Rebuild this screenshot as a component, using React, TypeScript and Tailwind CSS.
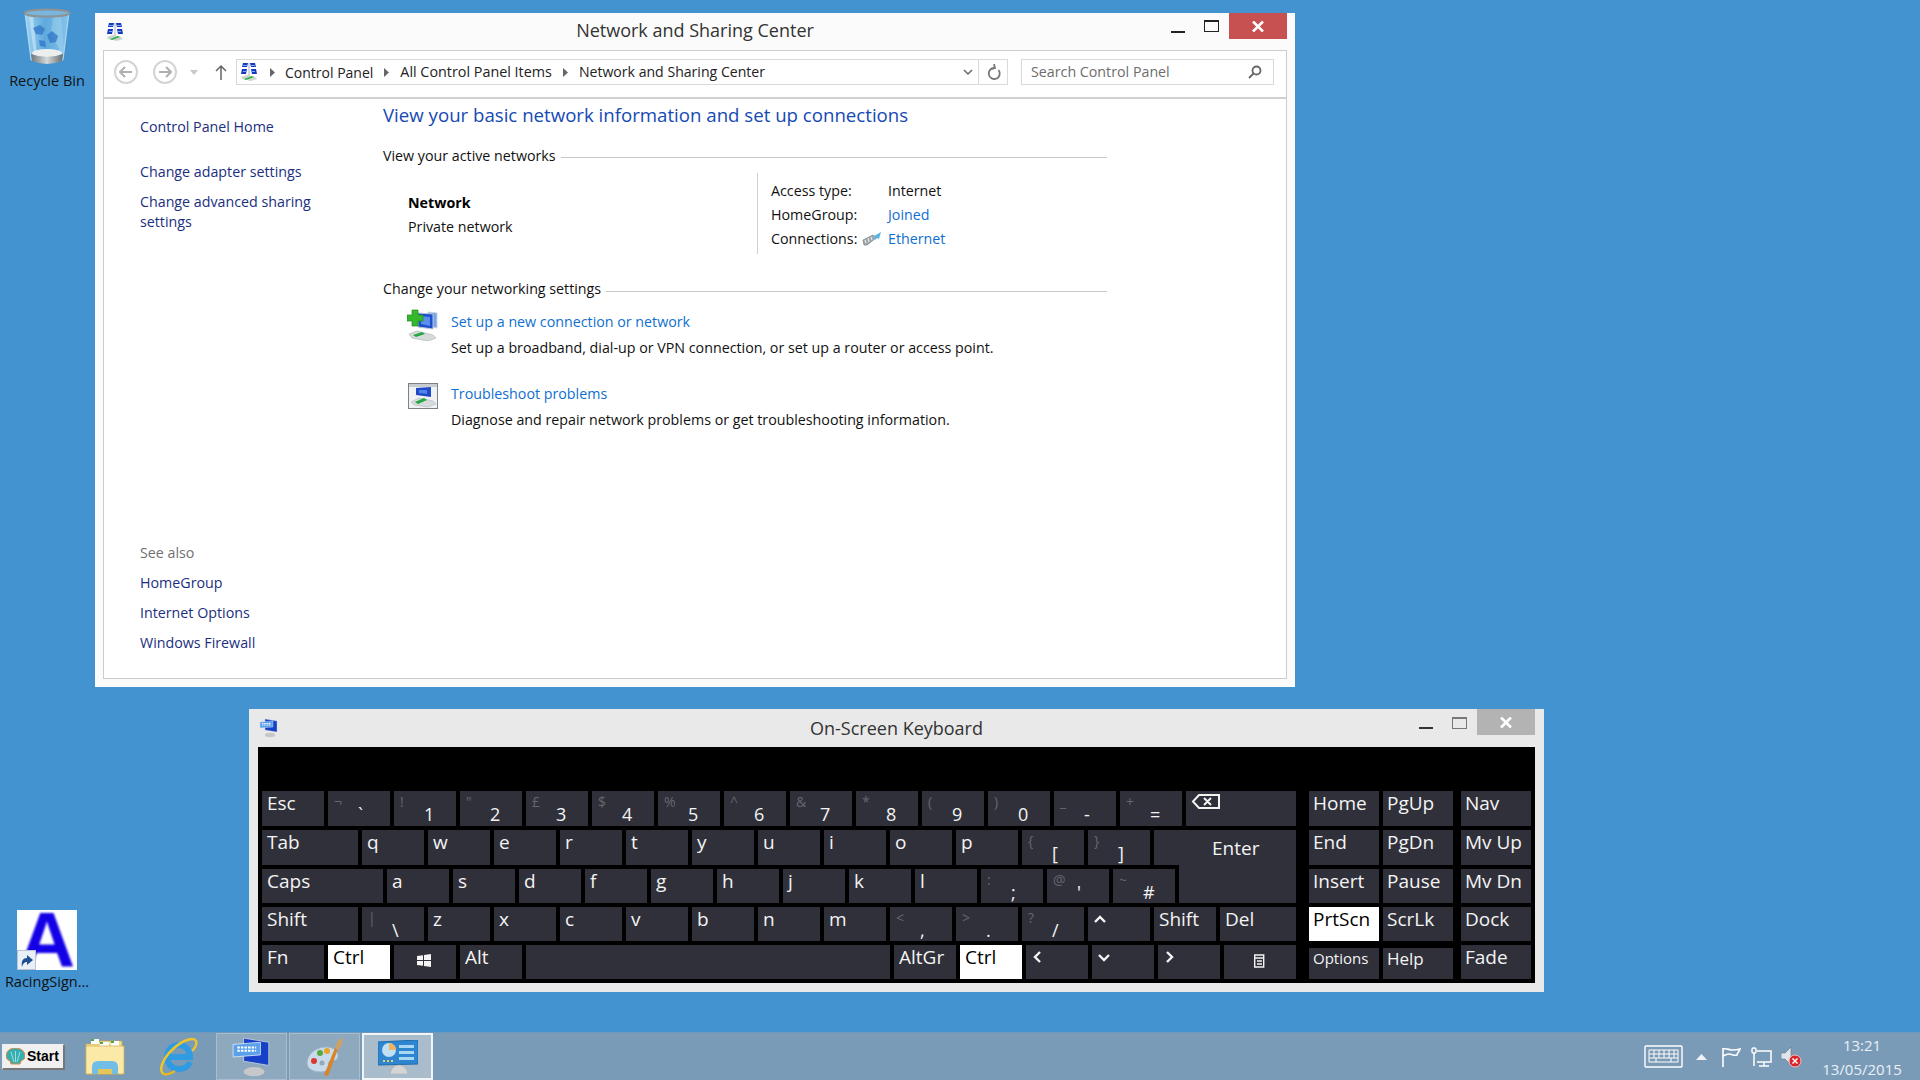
import type { ReactNode } from "react";

const FONT = "font-['Open_Sans','Noto_Sans',sans-serif]";

function CpIcon({ size = 20 }: { size?: number }) {
  return (
    <svg width={size} height={size} viewBox="0 0 20 20">
      <path d="M4 1h5l-1 4H3zM11 1h5l1 4h-5zM3 7h5l-1 5H2zM12 7h5l1 5h-5z" fill="#1438c0" />
      <path d="M4 3h4v1H4zM12 3h4v1h-4zM4 9h3v1H4zM13 9h3v1h-3z" fill="#7fa8f0" />
      <path d="M9 1h2v13H9z" fill="#cfd9ea" />
      <path d="M2 15l6-2 8 2 2 2-6 2-9-2z" fill="#cfd4cf" />
      <path d="M5 17l8-3 2 1-8 3z" fill="#2fb34a" />
    </svg>
  );
}

function RecycleBin() {
  return (
    <svg width="48" height="58" viewBox="0 0 48 58">
      <defs>
        <linearGradient id="binBody" x1="0" x2="1" y1="0" y2="0">
          <stop offset="0" stopColor="#9fd4f2" />
          <stop offset="0.45" stopColor="#5ea9dd" />
          <stop offset="1" stopColor="#86c4ea" />
        </linearGradient>
        <linearGradient id="binFoot" x1="0" x2="1" y1="0" y2="0">
          <stop offset="0" stopColor="#6f777b" />
          <stop offset="0.5" stopColor="#d5d8d8" />
          <stop offset="1" stopColor="#666e72" />
        </linearGradient>
      </defs>
      <path d="M2 5h44l-6 47q-16 5-32 0z" fill="url(#binBody)" stroke="#c7e4f6" strokeWidth="0.8" />
      <path d="M6 8l5 38 3 1-4-39z" fill="#d5ecf9" opacity="0.55" />
      <path d="M30 8l-2 16 11 24 2-5-3-35z" fill="#b5dcf4" opacity="0.35" />
      <ellipse cx="24" cy="5" rx="22.500" ry="3.600" fill="#7ab6dc" stroke="#8b9397" strokeWidth="2" />
      <path d="M10 20l7-3 5 4-3 6-6-1zM24 27l5-4 6 5-2 6-6 1zM16 32l6 1 1 6-6-1z" fill="#2f74c8" opacity="0.75" />
      <ellipse cx="24" cy="45" rx="15" ry="4" fill="#eceeee" />
      <path d="M8 46q16 6 32 0l-1 7q-15 6-30 0z" fill="url(#binFoot)" />
    </svg>
  );
}

function SetupIcon() {
  return (
    <svg width="32" height="32" viewBox="0 0 32 32">
      <path d="M21 3l9 1v15l-9-2z" fill="#78a2ea" stroke="#c8d4e6" />
      <path d="M11 4l15 1v15l-15-2z" fill="#1e4fcb" stroke="#b8c6dc" />
      <path d="M14 7l9 1v9l-9-2z" fill="#5a90ea" />
      <path d="M0 6h5V1h6v5h5v6h-5v5H5v-5H0z" fill="#35b82c" stroke="#1f8a1c" strokeWidth="0.7" />
      <path d="M2 25l8-3 16 4 3 3-8 3-16-3z" fill="#d7dbdc" stroke="#a9afb2" strokeWidth="0.6" />
      <path d="M6 26l9-3 3 2-9 3z" fill="#27a744" />
    </svg>
  );
}

function TroubleIcon() {
  return (
    <svg width="30" height="26" viewBox="0 0 30 26">
      <rect x="0.5" y="0.5" width="29" height="25" fill="#f1f2f3" stroke="#7d8286" />
      <rect x="1" y="1" width="28" height="3" fill="#c9ccd0" />
      <path d="M8 5l15-1v10l-15-2z" fill="#1f49c6" />
      <path d="M11 7l8 0v4l-8-1z" fill="#4f84e8" />
      <path d="M3 19l8-4 14 3 3 3-8 3-14-2z" fill="#d7dbdc" stroke="#a9afb2" strokeWidth="0.5" />
      <path d="M7 19l9-4 3 2-9 4z" fill="#27a744" />
    </svg>
  );
}

function EthernetIcon() {
  return (
    <svg width="20" height="15" viewBox="0 0 20 15">
      <path d="M1 8l10-5 3 3-9 7H2z" fill="#a3a8ad" stroke="#777c82" strokeWidth="0.7" />
      <path d="M3 8l1 3M6 6l1 4M9 5l1 3" stroke="#eef0f2" strokeWidth="1" />
      <path d="M12 4l7-4-2 7-2-1-2 2z" fill="#5db4e4" />
    </svg>
  );
}

function OskIcon({ w = 20, h = 20 }: { w?: number; h?: number }) {
  return (
    <svg width={w} height={h} viewBox="0 0 20 20">
      <path d="M6 1l12 2v11l-12-2z" fill="#1740c8" stroke="#c5d0de" strokeWidth="0.4" />
      <path d="M1 4l13-1v6L1 10z" fill="#5aa0ea" stroke="#dce6f4" strokeWidth="0.4" />
      <path d="M3 5.500h9M3 7h9" stroke="#fff" strokeWidth="0.9" strokeDasharray="1.200 0.500" />
      <ellipse cx="11" cy="17" rx="5" ry="2.200" fill="#c5c7c9" />
    </svg>
  );
}

function PaintIcon() {
  return (
    <svg width="40" height="40" viewBox="0 0 40 40">
      <path d="M2 26c0-9 9-16 19-16 8 0 12 4 12 9 0 4-4 5-7 5-3 0-3 3-2 5 1 3-2 6-8 6C8 35 2 32 2 26z" fill="#c8dbea" stroke="#9ab4ca" />
      <circle cx="9" cy="24" r="3" fill="#d83a32" />
      <circle cx="15" cy="16" r="3" fill="#58a83e" />
      <circle cx="22" cy="14" r="3" fill="#e6a52a" />
      <circle cx="17" cy="26" r="2.500" fill="#93a9bc" />
      <path d="M19 38l11-27 3 1-10 27z" fill="#d9832b" />
      <path d="M30 11l3-8 5-2-1 7-4 5z" fill="#c9a36a" />
    </svg>
  );
}

function ControlPanelIcon() {
  return (
    <svg width="40" height="34" viewBox="0 0 40 34">
      <path d="M0 2l40-2v24L0 25z" fill="#2f86d0" stroke="#1f6aae" />
      <circle cx="11" cy="10" r="7" fill="#bfe0f5" />
      <path d="M11 3a7 7 0 0 1 7 7h-7z" fill="#f2b35c" />
      <path d="M21 5h15v3H21zM21 11h15v3H21zM21 17h15v3H21z" fill="#a9d6f2" />
      <path d="M5 20h2v2H5zM9 20h2v2H9zM13 20h2v2h-2z" fill="#e8d16a" />
      <path d="M12 34c1-6 5-9 9-9s8 3 9 9z" fill="#d5d5d5" stroke="#a3a3a3" strokeWidth="0.5" />
    </svg>
  );
}

function FolderIcon() {
  return (
    <svg width="40" height="38" viewBox="0 0 40 38">
      <path d="M1 6h12l2-3h22v33H1z" fill="#f5dc8c" stroke="#c9a94e" strokeWidth="0.7" />
      <path d="M6 1h8v5H6zM15 4h9v5h-9zM26 3h8v6h-8z" fill="#fdfdfd" />
      <path d="M6 1h3v2H6zM15 4h3v2h-3zM26 3h3v2h-3z" fill="#4aa84a" />
      <path d="M1 8h38v28H1z" fill="#fbe9a8" stroke="#cfae52" strokeWidth="0.7" />
      <path d="M7 36v-7q0-6 6-6h14q6 0 6 6v7h-6v-5H13v5z" fill="#70bde6" />
      <path d="M13 31h14v5H13z" fill="#e4c65c" />
    </svg>
  );
}

function IeIcon() {
  return (
    <svg width="40" height="38" viewBox="0 0 40 38" fill="none">
      <path d="M10 19h22c0-7-5-12-11-12-7 0-12 5-12 12 0 7 5 12 12 12 5 0 9-2 11-7" stroke="#2f9be2" strokeWidth="6" />
      <path d="M6 36C0 34 4 21 15 11 26 1 36-1 38 3c1 3-1 7-4 10" stroke="#f0c52a" strokeWidth="2.400" />
      <path d="M4 35c3 3 8 1 13-2" stroke="#e8b820" strokeWidth="2.400" />
    </svg>
  );
}

function KeyboardTrayIcon() {
  return (
    <svg width="39" height="23" viewBox="0 0 39 23" fill="none" stroke="#fff">
      <rect x="1" y="1" width="37" height="21" rx="1" fill="#7a9ab5" strokeWidth="1.400" />
      <path d="M5 5h29v12H5z M10 5v8M15 5v8M20 5v8M25 5v8M30 5v8M5 9h29M5 13h29M12 13v4M27 13v4" strokeWidth="1" />
    </svg>
  );
}

type KeyDef = {
  w: number;
  label?: ReactNode;
  top?: string;
  main?: string;
  on?: boolean;
  pad?: string;
  cls?: string;
};

function Key({ w, label, top, main, on, pad, cls }: KeyDef) {
  return (
    <div
      className={`flex shrink-0 items-start overflow-hidden ${on ? "bg-white text-black" : "bg-[#30303a] text-[#f4f4f4]"} ${cls ?? ""}`}
      style={{ width: w }}
    >
      {label !== undefined && (
        <div className={`whitespace-nowrap text-[19px] leading-[24px] ${pad ?? "pl-[5px]"}`}>{label}</div>
      )}
      {main !== undefined && (
        <>
          <div className="w-[30px] pl-[6px] pt-[1px] text-[14px] leading-[20px] text-[#66666e]">{top}</div>
          <div className="pt-[12px] text-[18px] leading-[22px]">{main}</div>
        </>
      )}
    </div>
  );
}

const l = (label: ReactNode, w = 62, on = false): KeyDef => ({ w, label, on });
const s = (top: string, main: string, w = 62): KeyDef => ({ w, top, main });

const Chevron = ({ d }: { d: string }) => (
  <svg width="14" height="24" viewBox="0 0 14 24" className="ml-px" fill="none" stroke="#f4f4f4" strokeWidth="2.400">
    <path d={d} />
  </svg>
);

const Backspace = (
  <svg width="30" height="24" viewBox="0 0 30 24" fill="none" stroke="#f4f4f4" strokeWidth="2">
    <path d="M8 4h20v13H8l-6-6.500zM13 7l7 7M20 7l-7 7" />
  </svg>
);

const WinLogo = (
  <svg width="62" height="24" viewBox="0 0 62 24" className="-ml-[6px]" fill="#f4f4f4">
    <path d="M24 11l6-.8V15h-6zM31 10l7-1v6h-7zM24 16h6v4.800l-6-.8zM31 16h7v6l-7-1z" />
  </svg>
);

const MenuGlyph = (
  <svg width="72" height="24" viewBox="0 0 72 24" className="-ml-[5px]" fill="none" stroke="#f4f4f4" strokeWidth="1.400">
    <path d="M30.700 10h9v12h-9zM30.700 13h9M33 16h5M33 19h5" />
  </svg>
);

const rows: KeyDef[][] = [
  [l("Esc"), s("¬", "`"), s("!", "1"), s('"', "2"), s("£", "3"), s("$", "4"), s("%", "5"), s("^", "6"), s("&", "7"), s("*", "8"), s("(", "9"), s(")", "0"), s("_", "-"), s("+", "="), l(Backspace, 110)],
  [l("Tab", 96), l("q"), l("w"), l("e"), l("r"), l("t"), l("y"), l("u"), l("i"), l("o"), l("p"), s("{", "["), s("}", "]"), { w: 142, label: "Enter", pad: "pl-[58px] pt-[6px]" }],
  [l("Caps", 121), l("a"), l("s"), l("d"), l("f"), l("g"), l("h"), l("j"), l("k"), l("l"), s(":", ";"), s("@", "'"), s("~", "#"), { w: 117, cls: "-mt-1" }],
  [l("Shift", 96), s("|", "\\"), l("z"), l("x"), l("c"), l("v"), l("b"), l("n"), l("m"), s("<", ","), s(">", "."), s("?", "/"), l(<Chevron d="M1 15l5-5 5 5" />), l("Shift"), l("Del", 76)],
  [l("Fn"), l("Ctrl", 62, true), l(WinLogo), l("Alt"), { w: 364 }, l("AltGr"), l("Ctrl", 62, true), l(<Chevron d="M8 7l-5 5 5 5" />), l(<Chevron d="M1 10l5 5 5-5" />), l(<Chevron d="M3 7l5 5-5 5" />), l(MenuGlyph, 72)],
];

const navRows = [
  ["Home", "PgUp", "Nav"],
  ["End", "PgDn", "Mv Up"],
  ["Insert", "Pause", "Mv Dn"],
  ["PrtScn", "ScrLk", "Dock"],
  ["Options", "Help", "Fade"],
];

const rowHeights = ["h-[35px]", "h-[35px]", "h-[34px]", "h-[34px]", "h-[34px]"];

function navFirst(name: string) {
  if (name === "PrtScn") return "bg-white text-black text-[19px] leading-[24px]";
  if (name === "Options") return "mt-[3px] bg-[#30303a] text-[#f4f4f4] text-[15px] leading-[20px]";
  return "bg-[#30303a] text-[#f4f4f4] text-[19px] leading-[24px]";
}

function CloseX({ stroke }: { stroke: string }) {
  return (
    <svg width="12" height="11" viewBox="0 0 12 11" fill="none" stroke={stroke} strokeWidth="2.600">
      <path d="M1 .5l10 10M11 .5l-10 10" />
    </svg>
  );
}

function OnScreenKeyboard() {
  return (
    <div className="absolute left-[249px] top-[709px] h-[283px] w-[1295px] bg-[#e9e9e9] px-[9px] pb-[9px]">
      <div className="grid h-[38px] grid-cols-[1fr_auto_1fr] items-center">
        <div className="pl-[1px]">
          <OskIcon />
        </div>
        <div className="text-[18px] text-[#333]">On-Screen Keyboard</div>
        <div className="flex h-full items-start justify-end">
          <div className="mr-[19px] mt-[18px] h-[2px] w-[14px] bg-[#333]" />
          <div className="mr-[10px] mt-[8px] h-[12px] w-[15px] border border-t-2 border-[#777]" />
          <div className="flex h-[26px] w-[58px] items-center justify-center bg-[#b3b3b3]">
            <CloseX stroke="#fff" />
          </div>
        </div>
      </div>
      <div className="h-[236px] bg-black px-1 pt-[44px]">
        <div className="flex gap-[13px]">
          <div className="flex w-[1034px] flex-col gap-1">
            {rows.map((row, i) => (
              <div key={i} className={`flex gap-1 ${rowHeights[i]}`}>
                {row.map((k, j) => (
                  <Key key={j} {...k} />
                ))}
              </div>
            ))}
          </div>
          <div className="flex flex-col gap-1">
            {navRows.map((row, i) => (
              <div key={i} className={`flex ${rowHeights[i]}`}>
                <div className={`mr-1 w-[70px] pl-[4px] ${navFirst(row[0])}`}>{row[0]}</div>
                <div
                  className={`mr-2 w-[70px] bg-[#30303a] pl-[4px] text-[#f4f4f4] ${row[1] === "Help" ? "mt-[3px] text-[17px] leading-[22px]" : "text-[19px] leading-[24px]"}`}
                >
                  {row[1]}
                </div>
                <div className="w-[70px] bg-[#30303a] pl-[4px] text-[19px] leading-[24px] text-[#f4f4f4]">{row[2]}</div>
              </div>
            ))}
          </div>
        </div>
      </div>
    </div>
  );
}

function SectionHead({ children }: { children: string }) {
  return (
    <div className="flex items-center">
      <span className="whitespace-nowrap text-[14.25px] text-[#111]">{children}</span>
      <span className="ml-[5px] mt-[4px] h-px flex-1 bg-[#c8c8c8]" />
    </div>
  );
}

const Crumb = () => (
  <svg width="5" height="9" viewBox="0 0 5 9" className="ml-[11px]" fill="#666">
    <path d="M0 0l5 4.500-5 4.500z" />
  </svg>
);

function NetworkWindow() {
  return (
    <div className="absolute left-[95px] top-[13px] flex h-[674px] w-[1200px] flex-col bg-[#fbfbfb] px-[8px] pb-[8px]">
      <div className="grid h-[37px] shrink-0 grid-cols-[1fr_auto_1fr] items-center">
        <div className="pl-[2px]">
          <CpIcon />
        </div>
        <div className="pb-[2px] text-[18px] text-[#333]">Network and Sharing Center</div>
        <div className="flex h-full items-start justify-end">
          <div className="mr-[19px] mt-[18px] h-[2px] w-[14px] bg-[#222]" />
          <div className="mr-[10px] mt-[7px] h-[12px] w-[15px] border border-t-2 border-[#222]" />
          <div className="flex h-[26px] w-[58px] items-center justify-center bg-[#c75050]">
            <CloseX stroke="#fff" />
          </div>
        </div>
      </div>

      <div className="flex flex-1 flex-col border border-[#cdcdcd] bg-white">
        <div className="flex h-[48px] shrink-0 items-center border-b-2 border-[#d0d0d0] pb-[4px]">
          <div className="ml-[10px] flex h-[24px] w-[24px] items-center justify-center rounded-full border-2 border-[#d4d4d4]">
            <svg width="14" height="12" viewBox="0 0 14 12" fill="none" stroke="#b0b0b0" strokeWidth="2"><path d="M13 6H2M6 1L1 6l5 5" /></svg>
          </div>
          <div className="ml-[15px] flex h-[24px] w-[24px] items-center justify-center rounded-full border-2 border-[#d4d4d4]">
            <svg width="14" height="12" viewBox="0 0 14 12" fill="none" stroke="#b0b0b0" strokeWidth="2"><path d="M1 6h11M8 1l5 5-5 5" /></svg>
          </div>
          <svg width="8" height="5" viewBox="0 0 8 5" className="ml-[13px]" fill="#c8c8c8"><path d="M0 0h8L4 5z" /></svg>
          <svg width="12" height="16" viewBox="0 0 12 16" className="ml-[17px]" fill="none" stroke="#666" strokeWidth="1.500"><path d="M6 16V2M1 7l5-5 5 5" /></svg>
          <div className="ml-[9px] flex h-[26px] w-[772px] items-center border border-[#d9d9d9]">
            <div className="ml-[2px]"><CpIcon size={20} /></div>
            <Crumb />
            <span className="ml-[10px] text-[14px] text-[#222]">Control Panel</span>
            <Crumb />
            <span className="ml-[11px] text-[14.35px] text-[#222]">All Control Panel Items</span>
            <Crumb />
            <span className="ml-[11px] text-[14.1px] text-[#222]">Network and Sharing Center</span>
            <svg width="10" height="7" viewBox="0 0 10 7" className="ml-auto mr-[5px]" fill="none" stroke="#666" strokeWidth="1.500"><path d="M1 1l4 4 4-4" /></svg>
            <div className="flex h-full w-[29px] items-center justify-center border-l border-[#d9d9d9] pl-[2px]">
              <svg width="15" height="17" viewBox="0 0 15 17" fill="none" stroke="#777" strokeWidth="1.800"><path d="M11.500 6a5.500 5.500 0 1 1-4-2" /><path d="M7 0l1 4-4 1" /></svg>
            </div>
          </div>
          <div className="ml-[13px] flex h-[26px] w-[253px] items-center border border-[#d9d9d9] pl-[9px] pr-[11px]">
            <span className="flex-1 text-[14.25px] text-[#6d6d6d]">Search Control Panel</span>
            <svg width="14" height="14" viewBox="0 0 14 14" fill="none" stroke="#666" strokeWidth="1.800"><circle cx="8.500" cy="5.500" r="4" /><path d="M5.500 8.500L1 13" /></svg>
          </div>
        </div>

        <div className="flex flex-1">
          <nav className="flex w-[279px] shrink-0 flex-col pb-[25px] pl-[36px] pt-[18px] text-[14.25px] text-[#1a2f80]">
            <div className="leading-[20px]">Control Panel Home</div>
            <div className="mt-[25px] leading-[20px]">Change adapter settings</div>
            <div className="mt-[10px] w-[190px] leading-[20px]">Change advanced sharing settings</div>
            <div className="mt-auto leading-[20px] text-[#707070]">See also</div>
            <div className="mt-[10px] leading-[20px]">HomeGroup</div>
            <div className="mt-[10px] leading-[20px]">Internet Options</div>
            <div className="mt-[10px] leading-[20px]">Windows Firewall</div>
          </nav>

          <main className="w-[724px] pt-[2px]">
            <h1 className="text-[18.65px] font-normal leading-[28px] text-[#1549b4]">
              View your basic network information and set up connections
            </h1>
            <div className="mt-[16px]">
              <SectionHead>View your active networks</SectionHead>
            </div>
            <div className="mt-[7px] flex text-[14.25px] text-[#111]">
              <div className="w-[374px] pl-[25px] pt-[18px]">
                <div className="font-bold leading-[24px] text-black">Network</div>
                <div className="leading-[24px]">Private network</div>
              </div>
              <div className="grid grid-cols-[117px_1fr] border-l border-[#cfcfcf] pb-[3px] pl-[13px] pt-[6px] leading-[24px]">
                <div>Access type:</div>
                <div>Internet</div>
                <div>HomeGroup:</div>
                <div className="text-[#0f6fd0]">Joined</div>
                <div className="flex items-center justify-between pr-[6px]">
                  Connections:
                  <EthernetIcon />
                </div>
                <div className="text-[#0f6fd0]">Ethernet</div>
              </div>
            </div>
            <div className="mt-[24px]">
              <SectionHead>Change your networking settings</SectionHead>
            </div>
            <div className="ml-[24px] mt-[9px] flex">
              <SetupIcon />
              <div className="ml-[12px] text-[14.25px] leading-[26px] text-[#111]">
                <div className="text-[#0f6fd0]">Set up a new connection or network</div>
                <div>Set up a broadband, dial-up or VPN connection, or set up a router or access point.</div>
              </div>
            </div>
            <div className="ml-[24px] mt-[20px] flex">
              <div className="ml-[1px] mr-[1px] mt-[2px]">
                <TroubleIcon />
              </div>
              <div className="ml-[12px] text-[14.25px] leading-[26px] text-[#111]">
                <div className="text-[#0f6fd0]">Troubleshoot problems</div>
                <div>Diagnose and repair network problems or get troubleshooting information.</div>
              </div>
            </div>
          </main>
        </div>
      </div>
    </div>
  );
}

function Taskbar() {
  return (
    <div className="absolute inset-x-0 bottom-0 flex h-[48px] items-center border-t border-[#6f98bd] bg-[#7a9bb8]">
      <div className="ml-[2px] flex h-[26px] w-[63px] items-center gap-[2px] border border-b-2 border-r-2 border-[#eee] border-b-[#777] border-r-[#777] bg-[#f0f0f0] pl-[3px] font-['Liberation_Sans',sans-serif] text-[14px] font-bold text-black">
        <svg width="19" height="17" viewBox="0 0 19 17">
          <path d="M9.500 0c5 0 9.500 3 9.500 8 0 3-2 4-4 5l-1 3H5l-1-3C2 12 0 11 0 8c0-5 4.500-8 9.500-8z" fill="#35aeb0" stroke="#e8863a" />
          <path d="M9.500 3v11M5 4l3 10M14 4l-3 10" stroke="#bfe9e6" strokeWidth="0.800" />
        </svg>
        Start
      </div>
      <div className="ml-[20px]">
        <FolderIcon />
      </div>
      <div className="ml-[33px]">
        <IeIcon />
      </div>
      <div className="ml-[18px] flex h-[47px] w-[71px] items-center justify-center border border-[#a9bccd] bg-[#8ea8be]">
        <OskIcon w={42} h={42} />
      </div>
      <div className="ml-[2px] flex h-[47px] w-[71px] items-center justify-center border border-[#a9bccd] bg-[#8ea8be]">
        <PaintIcon />
      </div>
      <div className="ml-[2px] flex h-[47px] w-[71px] items-center justify-center border-2 border-[#f2f5f7] bg-[#a9bccb]">
        <ControlPanelIcon />
      </div>

      <div className="ml-auto flex items-center">
        <KeyboardTrayIcon />
        <svg width="11" height="6" viewBox="0 0 11 6" className="ml-[13px]" fill="#eef2f5"><path d="M5.500 0l5.500 6H0z" /></svg>
        <svg width="20" height="20" viewBox="0 0 20 20" className="ml-[14px]" fill="none" stroke="#fff" strokeWidth="1.600">
          <path d="M2 20V1M2 2c4-1 6 1 9 1 3 0 5 0 8-1-1 3-3 4-3 6-3 1-5-1-8-1-2 0-4 1-6 2" />
        </svg>
        <svg width="21" height="20" viewBox="0 0 21 20" className="ml-[10px]" fill="none" stroke="#fff" strokeWidth="1.500">
          <path d="M6 4h14v11H6M13 15v4M8 19h10" />
          <rect x="1" y="1" width="4" height="5" rx="1.500" />
          <path d="M3 6v13" />
        </svg>
        <svg width="22" height="22" viewBox="0 0 22 22" className="ml-[9px]">
          <path d="M0 7h4l6-6v18l-6-6H0z" fill="#dfe5ea" stroke="#6b7d8d" strokeWidth="0.700" />
          <circle cx="14" cy="15" r="6" fill="#d9262c" stroke="#f0c0c0" />
          <path d="M11.500 12.500l5 5M16.500 12.500l-5 5" stroke="#fff" strokeWidth="1.500" />
        </svg>
        <div className="ml-[14px] mr-[13px] w-[90px] text-center text-[15px] leading-[24px] text-[#e9f0f6]">
          <div>13:21</div>
          <div>13/05/2015</div>
        </div>
      </div>
    </div>
  );
}

export default function App() {
  return (
    <div className={`relative h-[1080px] w-[1920px] overflow-hidden bg-[#4293d0] ${FONT}`}>
      <div className="absolute left-[6px] top-[8px] flex w-[82px] flex-col items-center">
        <RecycleBin />
        <span className="mt-[6px] text-[14.5px] leading-[18px] text-[#111]">Recycle Bin</span>
      </div>
      <div className="absolute left-[2px] top-[910px] flex w-[90px] flex-col items-center">
        <div className="relative flex h-[60px] w-[60px] items-center justify-center overflow-hidden bg-white">
          <span className="font-['Liberation_Sans',sans-serif] text-[78px] font-bold leading-[60px] text-[#1400e6] blur-[1px]">A</span>
          <div className="absolute bottom-0 left-0 flex h-[20px] w-[19px] items-center justify-center border border-[#b8c4cf] bg-[#e8eff6]">
            <svg width="14" height="14" viewBox="0 0 14 14"><path d="M2 14c-1-6 1-9 5-9V2l6 5-6 5V9C5 9 3 10 2 14z" fill="#1f4f92" /></svg>
          </div>
        </div>
        <span className="mt-[3px] text-[14.5px] leading-[18px] text-[#111]">RacingSign...</span>
      </div>
      <NetworkWindow />
      <OnScreenKeyboard />
      <Taskbar />
    </div>
  );
}
